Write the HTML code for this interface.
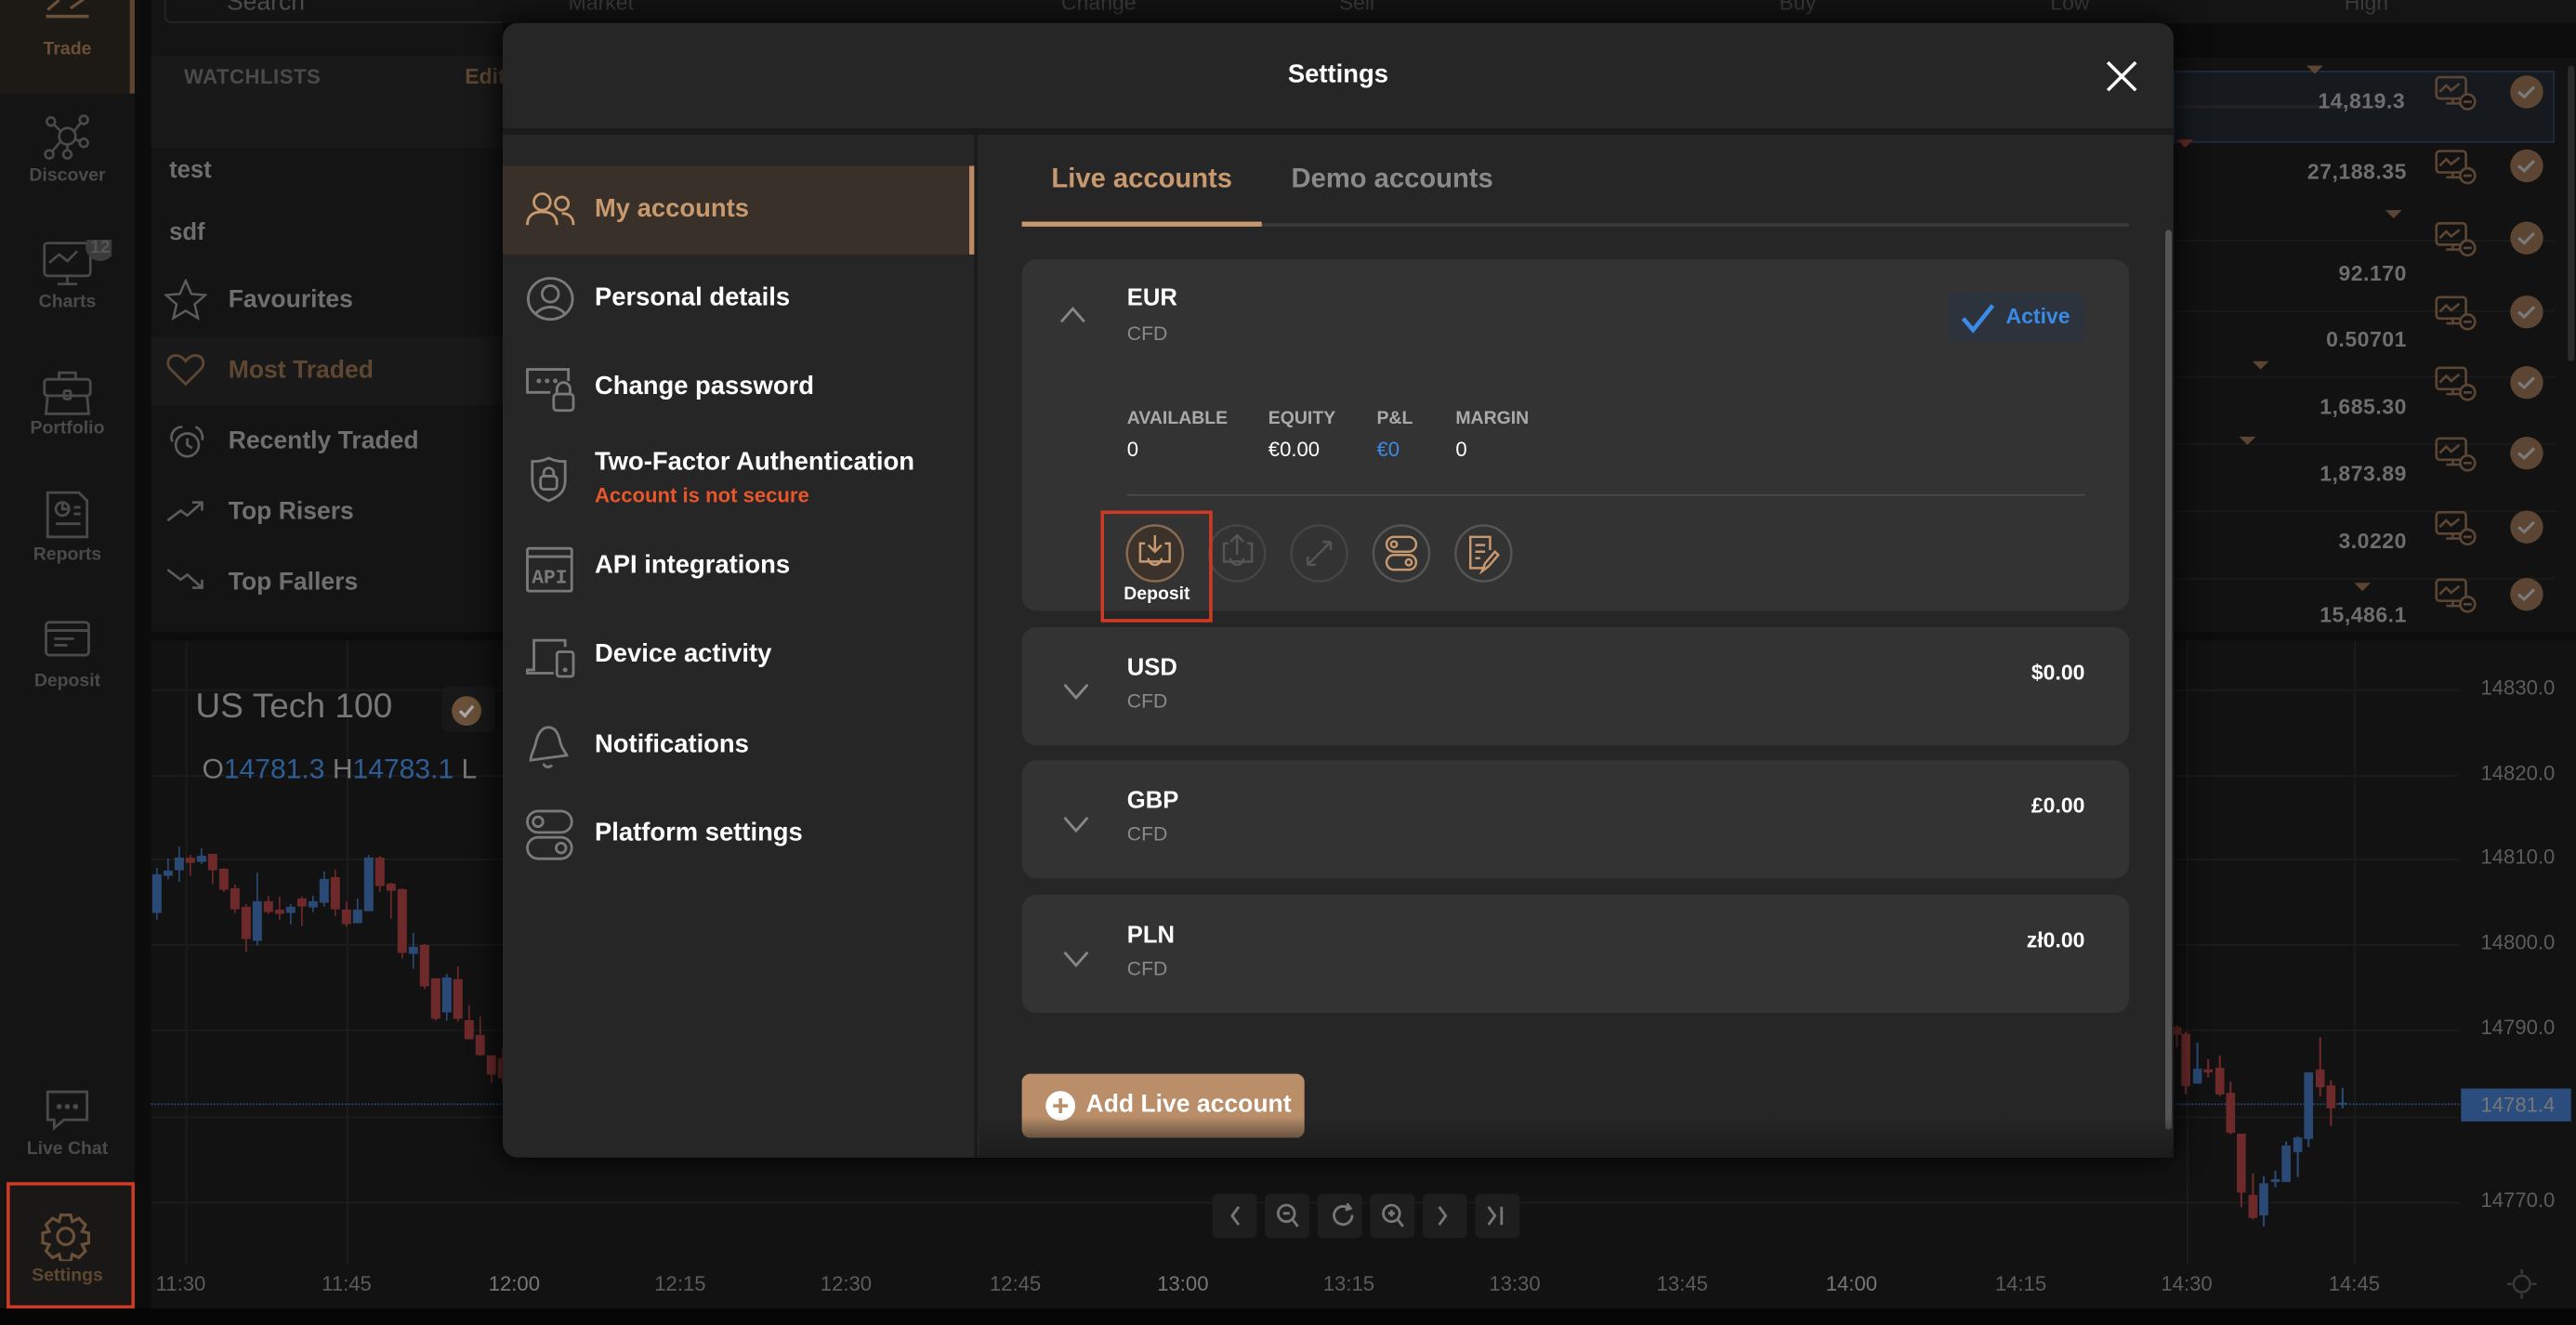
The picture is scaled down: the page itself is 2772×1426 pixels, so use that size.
<!DOCTYPE html>
<html><head><meta charset="utf-8"><style>
*{margin:0;padding:0;box-sizing:border-box}
html,body{width:2772px;height:1426px;overflow:hidden;background:#0b0b0b}
#w{position:absolute;left:0;top:0;width:1568px;height:807px;transform:scale(1.76786,1.76704);transform-origin:0 0;font-family:"Liberation Sans",sans-serif;background:#0c0c0c;overflow:hidden}
.a{position:absolute}
.nl{position:absolute;left:0;width:82px;text-align:center;font-size:11px;font-weight:bold;color:#4a4a4a}
.wl{position:absolute;left:139px;font-size:15px;font-weight:bold;color:#6f6f6f}
.row{position:absolute;left:1323px;width:232px;height:44px;border-bottom:1px solid #1b1b1b}
.row .v{position:absolute;right:90px;top:13px;font-size:13px;font-weight:bold;color:#6e6e6e;letter-spacing:.3px}
.row .bar{position:absolute;left:0;right:106px;top:8px;height:2px;background:#222}
.mi{position:absolute;left:362px;font-size:15.5px;font-weight:bold;color:#fff}
.card{position:absolute;left:622px;width:674px;background:#333;border-radius:9px}
.cur{position:absolute;left:64px;font-size:14.5px;font-weight:bold;color:#fff}
.cfd{position:absolute;left:64px;font-size:12px;color:#8a8a8a}
.amt{position:absolute;right:27px;font-size:13px;font-weight:bold;color:#fff}
.lab{position:absolute;font-size:11px;color:#aaa;font-weight:bold}
.val{position:absolute;font-size:12.5px;color:#fff}
.pa{position:absolute;left:1510px;font-size:12.5px;color:#5c5c5c}
.tl{position:absolute;top:775px;font-size:12.5px;color:#5c5c5c;transform:translateX(-50%)}
.gl{position:absolute;left:92px;width:1405px;height:1px;background:#1c1c1c}
.nb{position:absolute;top:727px;width:27px;height:27px;background:#1e1e1e;border-radius:3px}
</style></head><body><div id="w">

<div class="a" style="left:0;top:0;width:82px;height:797px;background:#141414"></div>
<div class="a" style="left:0;top:0;width:82px;height:57px;background:#1d1915;border-right:3px solid #5b4430"></div>
<svg class="a" style="left:26px;top:0" width="30" height="25" viewBox="0 0 30 25"><path d="M3 6 L10 0 M17 5 L27 -2" stroke="#6a5038" stroke-width="1.8" fill="none"/><line x1="2" y1="10" x2="28" y2="10" stroke="#6a5038" stroke-width="2"/></svg>
<div class="nl" style="top:24px;color:#6a5038">Trade</div>
<svg class="a" style="left:26px;top:69px" width="30" height="30" viewBox="0 0 30 30" fill="none" stroke="#4a4a4a" stroke-width="1.5"><circle cx="15" cy="14" r="5"/><circle cx="5" cy="5" r="2.5"/><circle cx="25" cy="4" r="2.5"/><circle cx="4" cy="25" r="2.5"/><circle cx="15" cy="25" r="2.5"/><circle cx="25" cy="18" r="2.5"/><path d="M7 7l4 4M23 6l-4 5M6 23l5-6M15 19v4M23 17l-3-1"/></svg>
<div class="nl" style="top:101px">Discover</div>
<svg class="a" style="left:26px;top:146px" width="42" height="32" viewBox="0 0 42 32" fill="none" stroke="#4a4a4a" stroke-width="1.5"><rect x="1" y="2" width="28" height="20" rx="2"/><path d="M4 14l6-5 5 4 6-6M9 27h12M15 22v5"/><circle cx="35" cy="4" r="9" fill="#3b3b3b" stroke="none"/><text x="35" y="8" font-size="11" font-weight="bold" fill="#555" text-anchor="middle" stroke="none" font-family="Liberation Sans">12</text></svg>
<div class="nl" style="top:178px">Charts</div>
<svg class="a" style="left:26px;top:225px" width="30" height="30" viewBox="0 0 30 30" fill="none" stroke="#4a4a4a" stroke-width="1.6"><rect x="1" y="6" width="28" height="10" rx="2"/><path d="M3 16l-1 11h26l-1-11M10 6V2h10v4"/><rect x="13" y="13" width="4" height="5" rx="1"/></svg>
<div class="nl" style="top:255px">Portfolio</div>
<svg class="a" style="left:27px;top:299px" width="28" height="30" viewBox="0 0 28 30" fill="none" stroke="#4a4a4a" stroke-width="1.6"><path d="M2 1h19l5 5v22H2z"/><circle cx="11" cy="11" r="4"/><path d="M11 7v4h4M18 10h4M18 14h4M7 20h15"/></svg>
<div class="nl" style="top:332px">Reports</div>
<svg class="a" style="left:27px;top:378px" width="28" height="22" viewBox="0 0 28 22" fill="none" stroke="#4a4a4a" stroke-width="1.6"><rect x="1" y="1" width="26" height="20" rx="2"/><path d="M1 6h26M6 11h12M6 15h8"/></svg>
<div class="nl" style="top:409px">Deposit</div>
<svg class="a" style="left:27px;top:663px" width="28" height="28" viewBox="0 0 28 28" fill="none" stroke="#4a4a4a" stroke-width="1.6"><path d="M2 2h24v17H12l-6 5v-5H2z"/><circle cx="9" cy="11" r=".8"/><circle cx="14" cy="11" r=".8"/><circle cx="19" cy="11" r=".8"/></svg>
<div class="nl" style="top:694px">Live Chat</div>
<div class="a" style="left:4px;top:720px;width:78px;height:77px;background:#1a1816;border:2.5px solid #d13a22"></div>
<svg class="a" style="left:25px;top:738px" width="30" height="30" viewBox="0 0 30 30" fill="none" stroke="#6a5038" stroke-width="1.8"><path d="M12 2h6l1 4 4-2 4 4-2 4 4 1v6l-4 1 2 4-4 4-4-2-1 4h-6l-1-4-4 2-4-4 2-4-4-1v-6l4-1-2-4 4-4 4 2z"/><circle cx="15" cy="15" r="5"/></svg>
<div class="nl" style="top:771px;color:#5e4732">Settings</div>

<div class="a" style="left:92px;top:0;width:214px;height:385px;background:#141414"></div>
<div class="a" style="left:100px;top:-10px;width:220px;height:24px;border:1px solid #262626;border-radius:4px"></div>
<div class="a" style="left:138px;top:-7px;font-size:15px;color:#4a4a4a">Search</div>
<div class="a" style="left:92px;top:34px;width:214px;height:56px;background:#191919"></div>
<div class="a" style="left:112px;top:40px;font-size:12.5px;font-weight:bold;color:#4a4a4a;letter-spacing:.3px">WATCHLISTS</div>
<div class="a" style="left:283px;top:39px;font-size:13px;font-weight:bold;color:#5e4732">Edit</div>
<div class="a" style="left:103px;top:96px;font-size:14.5px;font-weight:bold;color:#6e6e6e">test</div>
<div class="a" style="left:103px;top:134px;font-size:14.5px;font-weight:bold;color:#6e6e6e">sdf</div>
<svg class="a" style="left:100px;top:170px" width="26" height="26" viewBox="0 0 26 26"><path d="M13 1l3.5 8 8.5.7-6.5 5.6 2 8.5L13 19.3 5.5 23.8l2-8.5L1 9.7 9.5 9z" fill="none" stroke="#5c5c5c" stroke-width="1.4"/></svg>
<div class="wl" style="top:174px">Favourites</div>
<div class="a" style="left:92px;top:205px;width:214px;height:42px;background:#191919"></div>
<svg class="a" style="left:101px;top:214px" width="24" height="22" viewBox="0 0 24 22"><path d="M12 20L3 11C0 8 1 3 5.5 2.5 8.5 2.2 11 4.5 12 6c1-1.5 3.5-3.8 6.5-3.5C23 3 24 8 21 11z" fill="none" stroke="#5e4732" stroke-width="1.6"/></svg>
<div class="wl" style="top:217px;color:#5e4732">Most Traded</div>
<svg class="a" style="left:101px;top:256px" width="24" height="26" viewBox="0 0 24 26" fill="none" stroke="#5c5c5c" stroke-width="1.5"><circle cx="13" cy="15" r="7"/><path d="M13 11v4l3 2M4 13c-2-4 1-9 6-9M18 4c3 1 5 5 4 8"/></svg>
<div class="wl" style="top:260px">Recently Traded</div>
<svg class="a" style="left:101px;top:303px" width="24" height="16" viewBox="0 0 24 16" fill="none" stroke="#5c5c5c" stroke-width="1.5"><path d="M1 14l8-6 4 3 9-8M16 3h6v5"/></svg>
<div class="wl" style="top:303px">Top Risers</div>
<svg class="a" style="left:101px;top:345px" width="24" height="16" viewBox="0 0 24 16" fill="none" stroke="#5c5c5c" stroke-width="1.5"><path d="M1 2l8 6 4-3 9 8M16 13h6V8"/></svg>
<div class="wl" style="top:346px">Top Fallers</div>

<div class="a" style="left:306px;top:0;width:1262px;height:14px;background:#141414"></div>
<div class="a" style="left:346px;top:-6px;font-size:13px;color:#3a3a3a">Market</div>
<div class="a" style="left:646px;top:-6px;font-size:13px;color:#3a3a3a">Change</div>
<div class="a" style="left:815px;top:-6px;font-size:13px;color:#3a3a3a">Sell</div>
<div class="a" style="left:1083px;top:-6px;font-size:13px;color:#3a3a3a">Buy</div>
<div class="a" style="left:1248px;top:-6px;font-size:13px;color:#3a3a3a">Low</div>
<div class="a" style="left:1427px;top:-6px;font-size:13px;color:#3a3a3a">High</div>
<div class="a" style="left:1323px;top:35px;width:245px;height:350px;background:#121212"></div>
<div class="row" style="top:43px;background:#161a1f;border:1px solid #1f2d40"><div class="bar" style="top:20px"></div><div class="v" style="top:10px">14,819.3</div></div>
<div class="row" style="top:103px"><div class="v" style="top:-6px">27,188.35</div></div>
<div class="row" style="top:146px"><div class="v">92.170</div></div>
<div class="row" style="top:186px"><div class="v">0.50701</div></div>
<div class="row" style="top:227px"><div class="v">1,685.30</div></div>
<div class="row" style="top:268px"><div class="v">1,873.89</div></div>
<div class="row" style="top:309px"><div class="v">3.0220</div></div>
<div class="row" style="top:350px;border:none"><div class="v" style="top:17px">15,486.1</div></div>
<svg class="a" style="left:1480px;top:45px" width="30" height="330" viewBox="0 0 30 330" fill="none" stroke="#5c4633" stroke-width="1.5">
<g id="mi"><rect x="3" y="2" width="18" height="13" rx="2"/><path d="M5 11l4-4 3 3 5-4M9 18h8M13 15v3"/><circle cx="22" cy="17" r="4.5" fill="#121212"/><path d="M19.5 17h5"/></g>
<use href="#mi" y="45"/><use href="#mi" y="89"/><use href="#mi" y="134"/><use href="#mi" y="177"/><use href="#mi" y="220"/><use href="#mi" y="265"/><use href="#mi" y="306"/></svg>
<svg class="a" style="left:1518px;top:44px" width="40" height="340" viewBox="0 0 40 340" fill="none" stroke="#7a7a7a" stroke-width="1.8">
<g id="ck"><circle cx="20" cy="12" r="10" fill="#5c4633" stroke="none"/><path d="M15 12l3.5 3 6-6"/></g>
<use href="#ck" y="45"/><use href="#ck" y="89"/><use href="#ck" y="134"/><use href="#ck" y="177"/><use href="#ck" y="220"/><use href="#ck" y="265"/><use href="#ck" y="306"/></svg>
<div class="a" style="left:1563px;top:40px;width:4px;height:180px;background:#2c2c2c;border-radius:2px"></div>
<div class="a" style="left:1404px;top:40px;width:0;height:0;border:5px solid transparent;border-top:5px solid #5c4633"></div>
<div class="a" style="left:1325px;top:85px;width:0;height:0;border:5px solid transparent;border-top:5px solid #6e2a2a"></div>
<div class="a" style="left:1452px;top:128px;width:0;height:0;border:5px solid transparent;border-top:5px solid #5c4633"></div>
<div class="a" style="left:1371px;top:220px;border:5px solid transparent;border-top:5px solid #5c4633"></div>
<div class="a" style="left:1363px;top:266px;border:5px solid transparent;border-top:5px solid #5c4633"></div>
<div class="a" style="left:1433px;top:355px;border:5px solid transparent;border-top:5px solid #5c4633"></div>

<div class="a" style="left:92px;top:390px;width:1476px;height:407px;background:#121212"></div>
<div class="gl" style="top:420px"></div><div class="gl" style="top:472px"></div><div class="gl" style="top:523px"></div><div class="gl" style="top:575px"></div><div class="gl" style="top:627px"></div><div class="gl" style="top:680px"></div><div class="gl" style="top:732px"></div>
<div class="a" style="left:113px;top:390px;width:1px;height:380px;background:#1c1c1c"></div>
<div class="a" style="left:211px;top:390px;width:1px;height:380px;background:#1c1c1c"></div>
<div class="a" style="left:1331px;top:390px;width:1px;height:380px;background:#1c1c1c"></div>
<div class="a" style="left:1433px;top:390px;width:1px;height:380px;background:#1c1c1c"></div>
<div class="a" style="left:92px;top:672px;width:1405px;border-top:1px dotted #2a4d7e"></div>
<div class="a" style="left:119px;top:419px;font-size:21px;color:#777">US Tech 100</div>
<div class="a" style="left:269px;top:418px;width:32px;height:28px;background:#181818;border-radius:4px"></div>
<svg class="a" style="left:274px;top:423px" width="20" height="20" viewBox="0 0 20 20"><circle cx="10" cy="10" r="9" fill="#6a5038"/><path d="M6 10l3 3 5-6" stroke="#aaa" stroke-width="1.8" fill="none"/></svg>
<div class="a" style="left:123px;top:459px;font-size:17px;color:#777">O<span style="color:#2e5d93">14781.3</span> H<span style="color:#2e5d93">14783.1</span> L</div>
<svg class="a" style="left:90.5px;top:497.8px" width="226.2" height="203.6" viewBox="0 0 1200 1080" preserveAspectRatio="none">
<g stroke-width="5">
<path stroke="#2a4a75" d="M24 162V330M60 132V200M96 93V207M168 99V150M348 177V413M456 279V345M528 252V305M564 174V287M672 261V341M708 120V302M852 372V488M960 504V656"/>
<path stroke="#6e2a2a" d="M132 120V188M204 117V215M240 162V240M276 216V308M312 280V435M384 252V312M420 255V330M492 255V350M600 168V318M636 270V353M744 123V240M780 210V326M816 228V455M888 408V554M924 519V656M996 480V659M1032 606V716M1068 642V770M1104 768V857M1140 744V857"/>
</g>
<g fill="#2a4a75"><rect x="9" y="183" width="30" height="125"/><rect x="45" y="171" width="30" height="17"/><rect x="81" y="129" width="30" height="41"/><rect x="153" y="123" width="30" height="20"/><rect x="333" y="270" width="30" height="128"/><rect x="441" y="288" width="30" height="20"/><rect x="513" y="270" width="30" height="20"/><rect x="549" y="198" width="30" height="77"/><rect x="657" y="297" width="30" height="44"/><rect x="693" y="129" width="30" height="173"/><rect x="837" y="417" width="30" height="23"/><rect x="945" y="516" width="30" height="113"/></g>
<g fill="#6e2a2a"><rect x="117" y="129" width="30" height="17"/><rect x="189" y="117" width="30" height="53"/><rect x="225" y="165" width="30" height="68"/><rect x="261" y="228" width="30" height="68"/><rect x="297" y="288" width="30" height="104"/><rect x="369" y="270" width="30" height="35"/><rect x="405" y="297" width="30" height="14"/><rect x="477" y="261" width="30" height="26"/><rect x="585" y="192" width="30" height="104"/><rect x="621" y="297" width="30" height="47"/><rect x="729" y="129" width="30" height="92"/><rect x="765" y="213" width="30" height="23"/><rect x="801" y="231" width="30" height="206"/><rect x="873" y="411" width="30" height="134"/><rect x="909" y="519" width="30" height="131"/><rect x="981" y="522" width="30" height="128"/><rect x="1017" y="654" width="30" height="62"/><rect x="1053" y="702" width="30" height="65"/><rect x="1089" y="768" width="30" height="62"/><rect x="1125" y="777" width="30" height="65"/></g>
</svg>
<svg class="a" style="left:712.7px;top:599.6px" width="855.3" height="207" viewBox="0 0 1568 1098" preserveAspectRatio="none">
<g stroke-width="2.2">
<path stroke="#2a4a75" d="M1145 186V318M1219 617V779M1232 600V653M1244 505V636M1257 488V620M1269 282V523M1307 332V398"/>
<path stroke="#6e2a2a" d="M1122 130V200M1132 150V352M1157 240V298M1170 228V358M1182 312V482M1194 480V717M1207 608V757M1282 168V360M1294 308V455"/>
</g>
<g fill="#2a4a75"><rect x="1140" y="270" width="10" height="48"/><rect x="1214" y="640" width="10" height="104"/><rect x="1227" y="627" width="10" height="9"/><rect x="1239" y="518" width="10" height="118"/><rect x="1252" y="492" width="10" height="48"/><rect x="1264" y="282" width="10" height="215"/><rect x="1302" y="380" width="10" height="6"/></g>
<g fill="#6e2a2a"><rect x="1118" y="135" width="9" height="25"/><rect x="1127" y="157" width="10" height="169"/><rect x="1152" y="272" width="10" height="10"/><rect x="1165" y="267" width="10" height="86"/><rect x="1177" y="348" width="10" height="129"/><rect x="1189" y="480" width="10" height="190"/><rect x="1202" y="678" width="10" height="74"/><rect x="1277" y="273" width="10" height="57"/><rect x="1289" y="324" width="10" height="74"/></g>
</svg>
<div class="pa" style="top:412px">14830.0</div><div class="pa" style="top:464px">14820.0</div><div class="pa" style="top:515px">14810.0</div><div class="pa" style="top:567px">14800.0</div><div class="pa" style="top:619px">14790.0</div><div class="pa" style="top:724px">14770.0</div>
<div class="a" style="left:1498px;top:663px;width:67px;height:20px;background:#2a4d7e;font-size:12.5px;color:#777;padding:3px 0 0 12px">14781.4</div>
<div class="tl" style="left:110px">11:30</div><div class="tl" style="left:211px">11:45</div><div class="tl" style="left:313px;color:#777">12:00</div><div class="tl" style="left:414px">12:15</div><div class="tl" style="left:515px">12:30</div><div class="tl" style="left:618px">12:45</div><div class="tl" style="left:720px;color:#777">13:00</div><div class="tl" style="left:821px">13:15</div><div class="tl" style="left:922px">13:30</div><div class="tl" style="left:1024px">13:45</div><div class="tl" style="left:1127px;color:#777">14:00</div><div class="tl" style="left:1230px">14:15</div><div class="tl" style="left:1331px">14:30</div><div class="tl" style="left:1433px">14:45</div>
<svg class="a" style="left:1526px;top:773px" width="18" height="18" viewBox="0 0 18 18" fill="none" stroke="#3a3a3a" stroke-width="1.4"><circle cx="9" cy="9" r="5"/><path d="M9 0v3M9 15v3M0 9h3M15 9h3"/></svg>
<div class="nb" style="left:738px"></div><div class="nb" style="left:770px"></div><div class="nb" style="left:802px"></div><div class="nb" style="left:834px"></div><div class="nb" style="left:866px"></div><div class="nb" style="left:898px"></div>
<svg class="a" style="left:738px;top:727px" width="190" height="27" viewBox="0 0 190 27" fill="none" stroke="#777" stroke-width="1.6"><path d="M16 8l-4 5.5 4 5.5"/><circle cx="45" cy="12" r="5"/><path d="M43 12h4M49 16l3 4"/><path d="M83 9a5.5 5.5 0 1 0 2 4M82 6l2 3-3 1"/><circle cx="109" cy="12" r="5"/><path d="M107 12h4M109 10v4M113 16l3 4"/><path d="M138 8l4 5.5-4 5.5M168 8l4 5.5-4 5.5M176 8v11"/></svg>
<div class="a" style="left:0;top:797px;width:1568px;height:10px;background:#050505"></div>

<div class="a" style="left:306px;top:14px;width:1017px;height:691px;background:#262626;border-radius:9px;overflow:hidden;box-shadow:0 0 20px #000">
  <div class="a" style="left:0;top:64px;width:1017px;height:4px;background:#1a1a1a"></div>
  <div class="a" style="left:0;top:23px;width:1017px;text-align:center;font-size:15.5px;font-weight:bold;color:#fff">Settings</div>
  <svg class="a" style="left:976px;top:23px" width="19" height="19" viewBox="0 0 19 19"><path d="M1 1l17 17M18 1L1 18" stroke="#fff" stroke-width="2"/></svg>
  <div class="a" style="left:287px;top:68px;width:2px;height:623px;background:#1a1a1a"></div>
</div>
<div class="a" style="left:306px;top:101px;width:286px;height:54px;background:#383029"></div>
<div class="a" style="left:590px;top:101px;width:3px;height:54px;background:#b98a64"></div>
<svg class="a" style="left:320px;top:115px" width="30" height="26" viewBox="0 0 30 26" fill="none" stroke="#c8996f" stroke-width="1.6"><circle cx="10" cy="8" r="5"/><path d="M1 22c0-6 4-8 9-8s9 2 9 8"/><circle cx="22" cy="9" r="4"/><path d="M22 15c4 0 7 2 7 7"/></svg>
<div class="mi" style="top:119px;color:#c8996f">My accounts</div>
<svg class="a" style="left:320px;top:168px" width="30" height="28" viewBox="0 0 30 28" fill="none" stroke="#7a7a7a" stroke-width="1.6"><ellipse cx="15" cy="14" rx="13.5" ry="12.5"/><circle cx="15" cy="11" r="5"/><path d="M6 23c3-3 6-4 9-4s6 1 9 4"/></svg>
<div class="mi" style="top:173px">Personal details</div>
<svg class="a" style="left:320px;top:223px" width="30" height="30" viewBox="0 0 30 30" fill="none" stroke="#7a7a7a" stroke-width="1.6"><path d="M26 9V2H1v14h14"/><rect x="17" y="17" width="12" height="10" rx="2"/><path d="M19 17v-3a4 4 0 0 1 8 0v3"/><circle cx="8" cy="9" r=".6"/><circle cx="13" cy="9" r=".6"/><circle cx="18" cy="9" r=".6"/></svg>
<div class="mi" style="top:227px">Change password</div>
<svg class="a" style="left:322px;top:277px" width="24" height="30" viewBox="0 0 24 30" fill="none" stroke="#7a7a7a" stroke-width="1.6"><path d="M12 2c4 2 7 2 10 2v12c0 7-5 10-10 12C7 26 2 23 2 16V4c3 0 6 0 10-2z"/><rect x="7" y="13" width="10" height="8" rx="2"/><path d="M9 13v-2a3 3 0 0 1 6 0v2"/></svg>
<div class="mi" style="top:273px">Two-Factor Authentication</div>
<div class="a" style="left:362px;top:295px;font-size:12.5px;font-weight:bold;color:#e8562c">Account is not secure</div>
<svg class="a" style="left:320px;top:333px" width="30" height="28" viewBox="0 0 30 28" fill="none" stroke="#7a7a7a" stroke-width="1.6"><rect x="1" y="1" width="27" height="26" rx="1"/><path d="M1 6h27"/><text x="14.5" y="22" font-size="12" font-weight="bold" fill="#7a7a7a" stroke="none" text-anchor="middle" font-family="Liberation Mono">API</text></svg>
<div class="mi" style="top:336px">API integrations</div>
<svg class="a" style="left:320px;top:388px" width="30" height="26" viewBox="0 0 30 26" fill="none" stroke="#7a7a7a" stroke-width="1.6"><path d="M24 6V2H5v18H1v2h16"/><rect x="19" y="9" width="10" height="15" rx="1.5"/><circle cx="24" cy="20" r=".6"/></svg>
<div class="mi" style="top:390px">Device activity</div>
<svg class="a" style="left:322px;top:441px" width="26" height="29" viewBox="0 0 26 29" fill="none" stroke="#7a7a7a" stroke-width="1.6"><path d="M12 2c-5 0-7 5-8 10-1 4-3 7-3 10l22-3c-1-2-3-4-4-8-1-5-3-9-7-9zM9 24c0 2 3 3 5 1"/></svg>
<div class="mi" style="top:445px">Notifications</div>
<svg class="a" style="left:320px;top:493px" width="30" height="32" viewBox="0 0 30 32" fill="none" stroke="#7a7a7a" stroke-width="1.6"><rect x="1" y="1" width="27" height="13" rx="6.5"/><rect x="1" y="17" width="27" height="13" rx="6.5"/><circle cx="7.5" cy="7.5" r="3"/><circle cx="21.5" cy="23.5" r="3"/></svg>
<div class="mi" style="top:499px">Platform settings</div>

<div class="a" style="left:640px;top:100px;font-size:16.5px;font-weight:bold;color:#c8996f">Live accounts</div>
<div class="a" style="left:786px;top:100px;font-size:16.5px;font-weight:bold;color:#8a8a8a">Demo accounts</div>
<div class="a" style="left:622px;top:136px;width:674px;height:2px;background:#3a3a3a"></div>
<div class="a" style="left:622px;top:135px;width:146px;height:3px;background:#c8996f"></div>
<div class="a" style="left:1318px;top:140px;width:4px;height:548px;background:#555;border-radius:2px"></div>

<div class="card" style="top:158px;height:214px">
  <svg class="a" style="left:23px;top:28px" width="16" height="12" viewBox="0 0 16 12"><path d="M1 10l7-8 7 8" stroke="#888" stroke-width="1.6" fill="none"/></svg>
  <div class="cur" style="top:16px">EUR</div><div class="cfd" style="top:38px">CFD</div>
  <div class="a" style="left:564px;top:20px;width:83px;height:30px;background:#2c333c;border-radius:4px"></div>
  <svg class="a" style="left:572px;top:27px" width="20" height="18" viewBox="0 0 20 18"><path d="M1 9l6 7L19 1" stroke="#3a8ae6" stroke-width="2.6" fill="none"/></svg>
  <div class="a" style="left:599px;top:27px;font-size:13px;font-weight:bold;color:#3a8ae6">Active</div>
  <div class="lab" style="left:64px;top:91px">AVAILABLE</div><div class="lab" style="left:150px;top:91px">EQUITY</div><div class="lab" style="left:216px;top:91px">P&amp;L</div><div class="lab" style="left:264px;top:91px">MARGIN</div>
  <div class="val" style="left:64px;top:109px">0</div><div class="val" style="left:150px;top:109px">€0.00</div><div class="val" style="left:216px;top:109px;color:#3a8ae6">€0</div><div class="val" style="left:264px;top:109px">0</div>
  <div class="a" style="left:64px;top:143px;width:583px;height:1px;background:#4a4a4a"></div>
</div>
<svg class="a" style="left:684px;top:318px" width="240" height="38" viewBox="0 0 240 38" fill="none" stroke-width="1.4">
<circle cx="19" cy="19" r="17" fill="#3a322b" stroke="#8a6a4e"/>
<path d="M19 8v10M15 14l4 4 4-4M13 13h-3v11h18V13h-3M15 22a4 4 0 0 0 8 0" stroke="#c8996f"/>
<circle cx="69" cy="19" r="17" stroke="#444"/>
<path d="M69 20V9M65 12l4-4 4 4M64 13h-3v11h17V13h-3M65 22a4 4 0 0 0 8 0" stroke="#555"/>
<circle cx="119" cy="19" r="17" stroke="#444"/>
<path d="M112 26l14-14M112 26v-5M112 26h5M126 12h-5M126 12v5" stroke="#555"/>
<circle cx="169" cy="19" r="17" stroke="#555"/>
<rect x="160" y="9" width="18" height="9" rx="4.5" stroke="#c8996f"/><rect x="160" y="20" width="18" height="9" rx="4.5" stroke="#c8996f"/><circle cx="164.5" cy="13.5" r="1.8" stroke="#c8996f"/><circle cx="173.5" cy="24.5" r="1.8" stroke="#c8996f"/>
<circle cx="219" cy="19" r="17" stroke="#555"/>
<path d="M220 28h-9V9h12v8M214 14h6M214 18h6M214 22h3M218 30l2-5 6-7 2 2-6 7z" stroke="#c8996f"/>
</svg>
<div class="a" style="left:684px;top:356px;width:38px;text-align:center;font-size:11px;font-weight:bold;color:#fff">Deposit</div>
<div class="a" style="left:670px;top:311px;width:68px;height:68px;border:2.5px solid #d13a22"></div>

<div class="card" style="top:382px;height:72px">
  <svg class="a" style="left:25px;top:33px" width="16" height="12" viewBox="0 0 16 12"><path d="M1 2l7 8 7-8" stroke="#888" stroke-width="1.6" fill="none"/></svg>
  <div class="cur" style="top:17px">USD</div><div class="cfd" style="top:38px">CFD</div><div class="amt" style="top:20px">$0.00</div>
</div>
<div class="card" style="top:463px;height:72px">
  <svg class="a" style="left:25px;top:33px" width="16" height="12" viewBox="0 0 16 12"><path d="M1 2l7 8 7-8" stroke="#888" stroke-width="1.6" fill="none"/></svg>
  <div class="cur" style="top:17px">GBP</div><div class="cfd" style="top:38px">CFD</div><div class="amt" style="top:20px">£0.00</div>
</div>
<div class="card" style="top:545px;height:72px">
  <svg class="a" style="left:25px;top:33px" width="16" height="12" viewBox="0 0 16 12"><path d="M1 2l7 8 7-8" stroke="#888" stroke-width="1.6" fill="none"/></svg>
  <div class="cur" style="top:17px">PLN</div><div class="cfd" style="top:38px">CFD</div><div class="amt" style="top:20px">zł0.00</div>
</div>
<div class="a" style="left:622px;top:654px;width:172px;height:39px;background:#b98e69;border-radius:5px"></div>
<svg class="a" style="left:636px;top:664px" width="19" height="19" viewBox="0 0 19 19"><circle cx="9.5" cy="9.5" r="9" fill="#fff"/><path d="M9.5 5v9M5 9.5h9" stroke="#b98e69" stroke-width="2"/></svg>
<div class="a" style="left:661px;top:664px;font-size:15px;font-weight:bold;color:#fff">Add Live account</div>
<div class="a" style="left:596px;top:680px;width:727px;height:25px;background:linear-gradient(rgba(38,38,38,0),#1c1c1c)"></div>
</div></body></html>
